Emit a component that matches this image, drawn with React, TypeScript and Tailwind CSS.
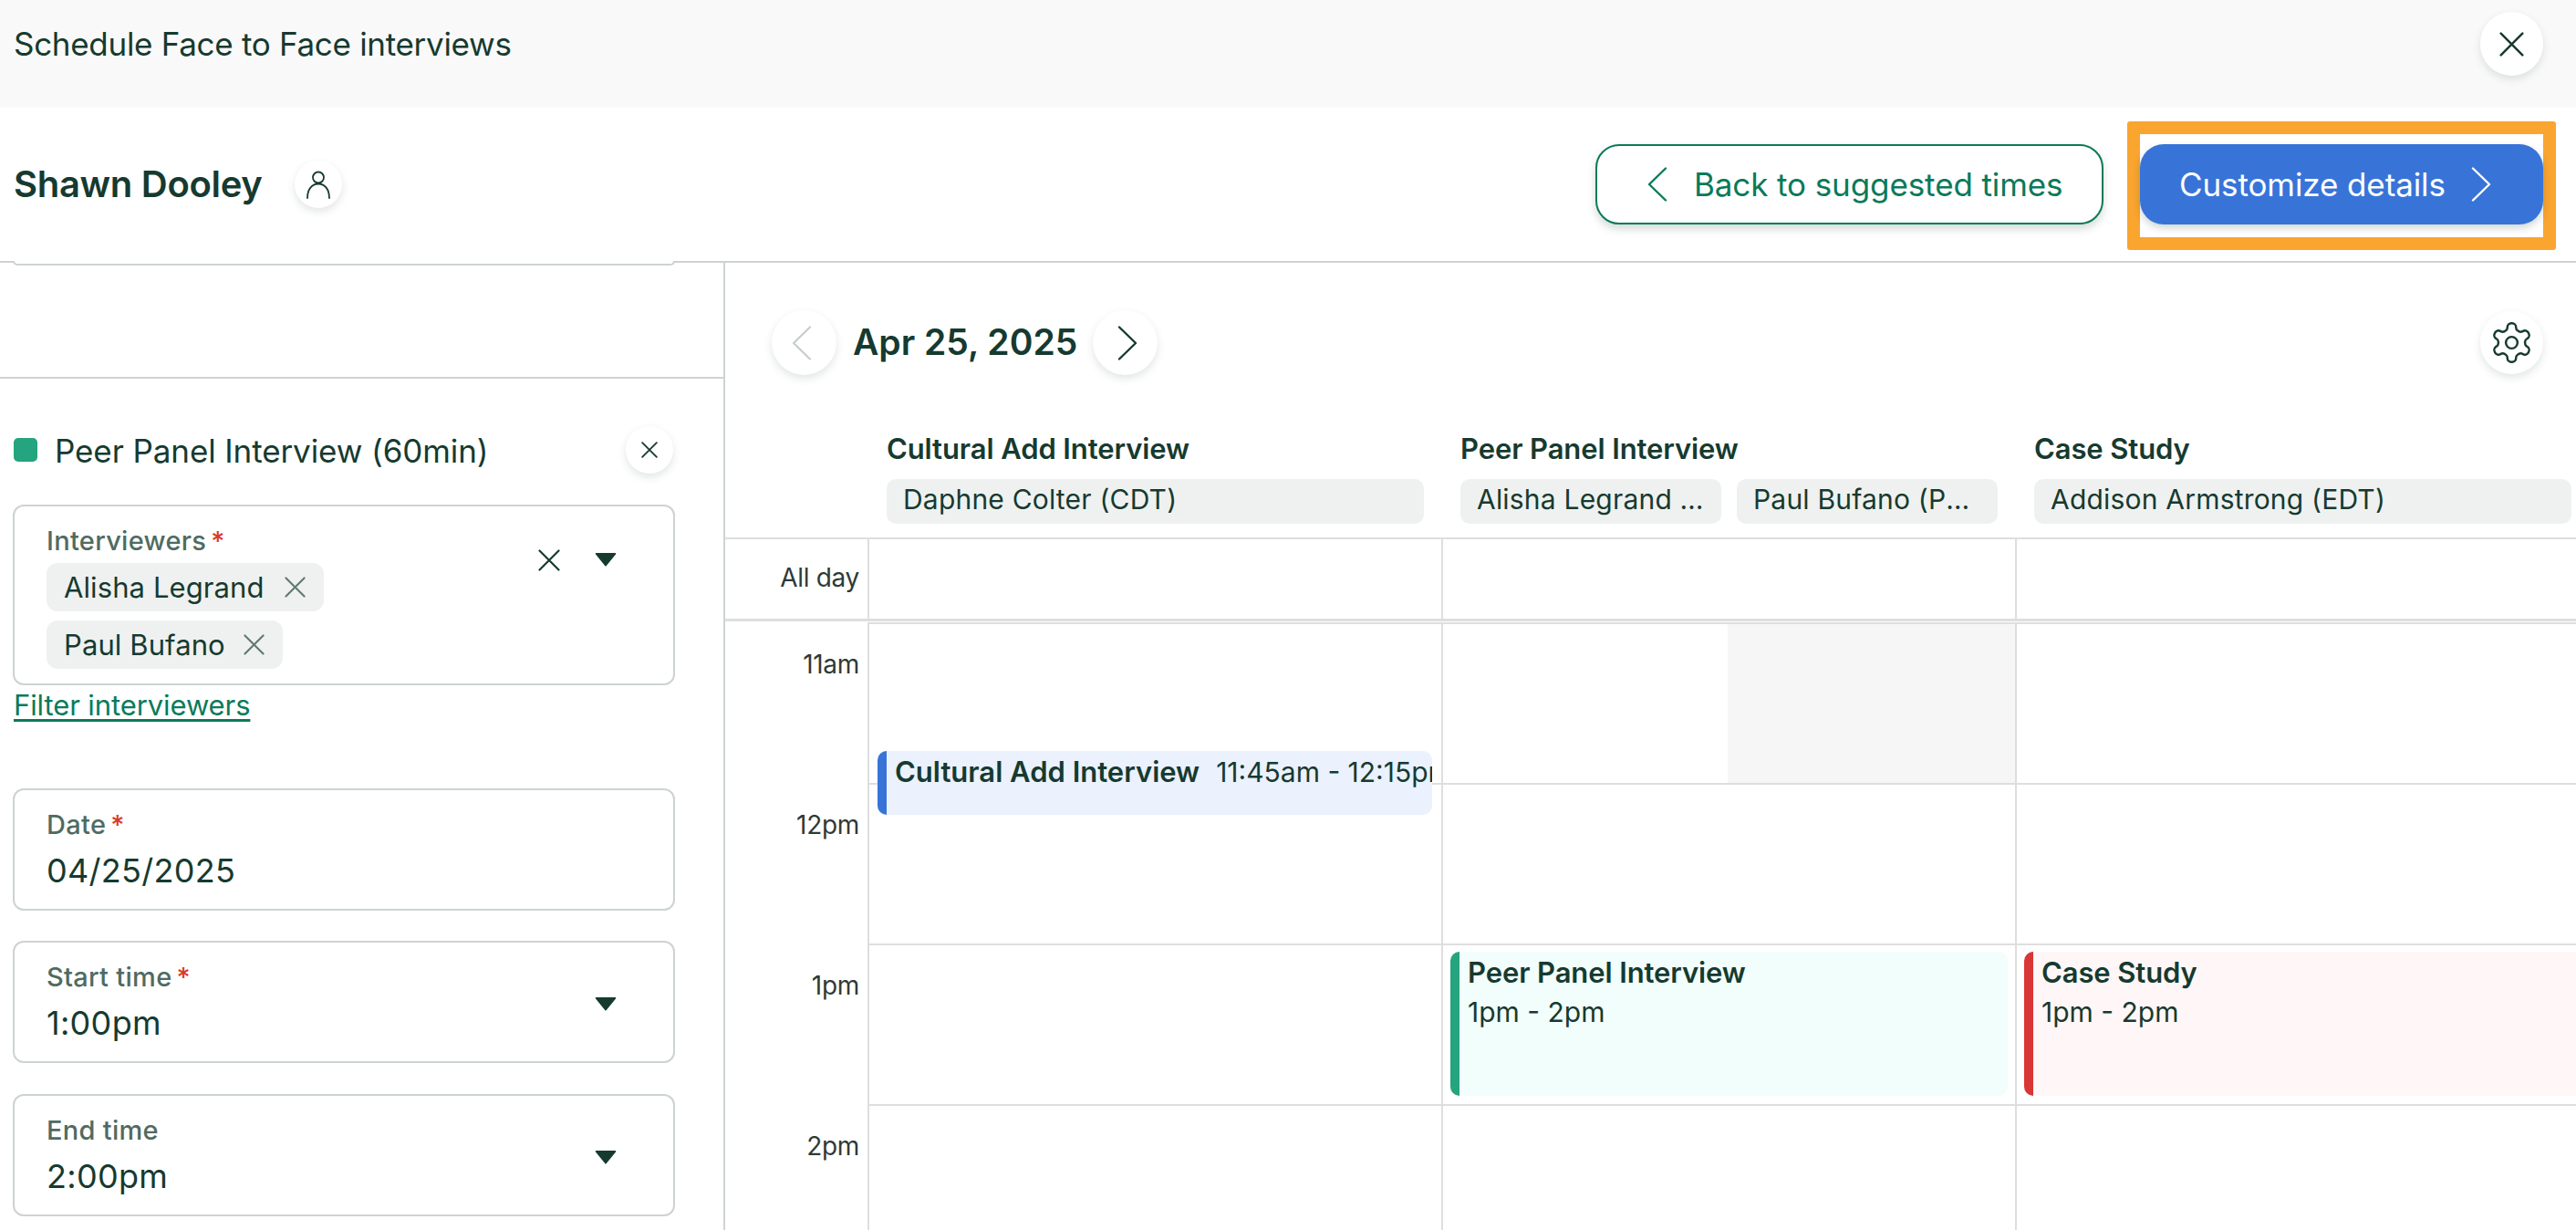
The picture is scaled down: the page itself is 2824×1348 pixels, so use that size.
import React from "react";

const X = ({ size, sw = 2.4, color = "#163a30" }: { size: number; sw?: number; color?: string }) => (
  <svg width={size} height={size} viewBox="0 0 24 24" fill="none" stroke={color} strokeWidth={sw} strokeLinecap="round">
    <path d="M1.5 1.5 22.5 22.5M22.5 1.5 1.5 22.5" />
  </svg>
);

const Caret = () => (
  <svg width="24" height="16" viewBox="0 0 24 16" className="shrink-0">
    <path d="M1.5 1h21a.8.8 0 0 1 .7 1.2L12.8 15a1 1 0 0 1-1.6 0L.8 2.2A.8.8 0 0 1 1.5 1z" fill="#163a30" />
  </svg>
);

const Chevron = ({ dir, color, w = 22, h = 38, sw = 2.4 }: { dir: "l" | "r"; color: string; w?: number; h?: number; sw?: number }) => (
  <svg width={w} height={h} viewBox={`0 0 ${w} ${h}`} fill="none" stroke={color} strokeWidth={sw} strokeLinecap="round" strokeLinejoin="round">
    {dir === "l" ? <path d={`M${w - 2} 1.5 2 ${h / 2} ${w - 2} ${h - 1.5}`} /> : <path d={`M2 1.5 ${w - 2} ${h / 2} 2 ${h - 1.5}`} />}
  </svg>
);

const Person = () => (
  <svg width="26" height="31" viewBox="0 0 26 31" fill="none" stroke="#163a30" strokeWidth="1.8">
    <circle cx="13" cy="7.5" r="6" />
    <path d="M1 30c0-9 4.5-15.5 12-15.5S25 21 25 30" strokeLinecap="round" />
  </svg>
);

const Gear = () => (
  <svg width="51" height="51" viewBox="0 0 24 24" fill="none" stroke="#163a30" strokeWidth="1.15" strokeLinecap="round" strokeLinejoin="round">
    <path d="M12.22 2h-.44a2 2 0 0 0-2 2v.18a2 2 0 0 1-1 1.73l-.43.25a2 2 0 0 1-2 0l-.15-.08a2 2 0 0 0-2.73.73l-.22.38a2 2 0 0 0 .73 2.73l.15.1a2 2 0 0 1 1 1.72v.51a2 2 0 0 1-1 1.74l-.15.09a2 2 0 0 0-.73 2.73l.22.38a2 2 0 0 0 2.73.73l.15-.08a2 2 0 0 1 2 0l.43.25a2 2 0 0 1 1 1.73V20a2 2 0 0 0 2 2h.44a2 2 0 0 0 2-2v-.18a2 2 0 0 1 1-1.73l.43-.25a2 2 0 0 1 2 0l.15.08a2 2 0 0 0 2.73-.73l.22-.39a2 2 0 0 0-.73-2.73l-.15-.08a2 2 0 0 1-1-1.74v-.5a2 2 0 0 1 1-1.74l.15-.09a2 2 0 0 0 .73-2.73l-.22-.38a2 2 0 0 0-2.73-.73l-.15.08a2 2 0 0 1-2 0l-.43-.25a2 2 0 0 1-1-1.73V4a2 2 0 0 0-2-2z" />
    <circle cx="12" cy="12" r="3" />
  </svg>
);

const Star = () => <span className="text-[#d93a2b] ml-[5px]">*</span>;

const Field = ({ label, req, value, caret }: { label: string; req?: boolean; value: string; caret?: boolean }) => (
  <div className="mx-[14px] w-[726px] h-[134px] border-2 border-[#cdd3d1] rounded-[12px] pl-[35px] pr-[62px] pt-[20px] flex justify-between">
    <div>
      <div className="h-[36px] leading-[36px] text-[29px] font-medium text-[#4f6b61] tracking-[0.3px]">
        {label}
        {req && <Star />}
      </div>
      <div className="mt-[10px] h-[44px] leading-[44px] text-[36px] text-[#163a30] tracking-[0.3px]">{value}</div>
    </div>
    {caret && (
      <div className="mt-[39px]">
        <Caret />
      </div>
    )}
  </div>
);

const Chip = ({ name, width }: { name: string; width: string }) => (
  <div className={`${width} h-[53px] bg-[#eff1f0] rounded-[12px] pl-[19px] pr-[20px] flex items-center justify-between`}>
    <span className="text-[31px] text-[#163a30] whitespace-nowrap tracking-[0.1px] translate-y-[1px]">{name}</span>
    <X size={23} sw={2.2} color="#5f7a70" />
  </div>
);

const HeaderChip = ({ text }: { text: string }) => (
  <div className="flex-1 min-w-0 h-[49px] bg-[#eff1f0] rounded-[10px] pl-[18px] pr-[14px] pb-[4px] flex items-center">
    <span className="text-[30px] text-[#163a30] truncate tracking-[0.2px]">{text}</span>
  </div>
);

const HeaderCol = ({ title, chips }: { title: string; chips: string[] }) => (
  <div className="w-[629px] shrink-0 pl-[21px] pr-[19px]">
    <div className="h-[40px] leading-[40px] text-[31px] font-semibold text-[#163a30] tracking-[-0.1px]">{title}</div>
    <div className="mt-[13px] flex gap-[17px]">
      {chips.map((c) => (
        <HeaderChip key={c} text={c} />
      ))}
    </div>
  </div>
);

const HourRows = () => (
  <>
    <div className="h-[176px] border-t-2 border-[#dedede]" />
    <div className="h-[176px] border-t-2 border-[#dedede]" />
    <div className="h-[176px] border-t-2 border-[#dedede]" />
    <div className="h-[176px] border-t-2 border-[#dedede]" />
  </>
);

const RoundBtn = ({ children, cls }: { children: React.ReactNode; cls: string }) => (
  <div className={`${cls} rounded-full bg-white flex items-center justify-center shadow-[0_4px_10px_rgba(20,50,40,0.12)] shrink-0`}>{children}</div>
);

export default function App() {
  return (
    <div className="w-[2824px] h-[1348px] overflow-hidden bg-white text-[#163a30] font-[Inter,sans-serif]">
      {/* top bar */}
      <div className="h-[118px] bg-[#f9f9f9] pt-[13px] pl-[15px] pr-[36px]">
        <div className="h-[70px] flex items-center justify-between">
          <span className="text-[35px] tracking-[-0.3px]">Schedule Face to Face interviews</span>
          <RoundBtn cls="w-[69px] h-[70px]">
            <X size={27} sw={2.2} />
          </RoundBtn>
        </div>
      </div>

      {/* candidate row */}
      <div className="h-[170px] border-b-2 border-[#cdd3d1] pl-[15px] pr-[22px] flex items-center justify-between">
        <div className="flex items-center">
          <span className="text-[40px] font-semibold tracking-[-0.3px]">Shawn Dooley</span>
          <RoundBtn cls="ml-[35px] w-[52px] h-[52px]">
            <Person />
          </RoundBtn>
        </div>
        <div className="flex items-center">
          <div className="w-[557px] h-[88px] border-2 border-[#0a7a5a] rounded-[26px] bg-white shadow-[0_5px_10px_rgba(20,50,40,0.18)] pl-[55px] flex items-center text-[#0a7a5a]">
            <Chevron dir="l" color="#0a7a5a" />
            <span className="ml-[29px] text-[35px] whitespace-nowrap tracking-[-0.1px]">Back to suggested times</span>
          </div>
          <div className="ml-[26px] mt-[3px] w-[470px] h-[141px] border-[14px] border-[#f9a52f] rounded-[3px] pt-[11px]">
            <div className="w-[442px] h-[88px] bg-[#3874d8] rounded-[26px] shadow-[0_4px_8px_rgba(20,50,40,0.2)] pl-[43px] flex items-center text-white">
              <span className="text-[35px] whitespace-nowrap tracking-[-0.1px]">Customize details</span>
              <span className="ml-[28px]">
                <Chevron dir="r" color="#ffffff" />
              </span>
            </div>
          </div>
        </div>
      </div>

      <div className="flex h-[1060px]">
        {/* left panel */}
        <div className="w-[795px] shrink-0 border-r-2 border-[#cdd3d1]">
          <div className="h-[129px] border-b-2 border-[#cdd3d1]">
            <div className="ml-[14px] -mt-[2px] w-[726px] h-[5px] border-2 border-t-0 border-[#cdd3d1] rounded-b-[8px] bg-white relative" />
          </div>
          <div className="mt-[52px] pl-[15px] pr-[55px] h-[52px] flex items-center justify-between">
            <div className="flex items-center">
              <div className="w-[26px] h-[26px] rounded-[5px] bg-[#24a47f]" />
              <span className="ml-[19px] text-[35px] tracking-[-0.1px] translate-y-[1px]">Peer Panel Interview (60min)</span>
            </div>
            <RoundBtn cls="w-[52px] h-[52px]">
              <X size={18} sw={2.4} />
            </RoundBtn>
          </div>

          <div className="mt-[34px] mx-[14px] w-[726px] h-[198px] border-2 border-[#cdd3d1] rounded-[12px] pl-[35px] pr-[62px] pt-[20px] flex justify-between">
            <div>
              <div className="h-[36px] leading-[36px] text-[29px] font-medium text-[#4f6b61] tracking-[0.3px]">
                Interviewers
                <Star />
              </div>
              <div className="mt-[6px] flex flex-col gap-[10px]">
                <Chip name="Alisha Legrand" width="w-[304px]" />
                <Chip name="Paul Bufano" width="w-[259px]" />
              </div>
            </div>
            <div className="mt-[27px] flex items-start gap-[38px]">
              <X size={24} sw={2.2} />
              <div className="mt-[3px]">
                <Caret />
              </div>
            </div>
          </div>

          <div className="mt-[4px] ml-[15px] h-[36px] leading-[36px] text-[31px] text-[#0a7a5a] underline underline-offset-[4px] tracking-[-0.1px]">
            Filter interviewers
          </div>

          <div className="mt-[73px]">
            <Field label="Date" req value="04/25/2025" />
          </div>
          <div className="mt-[33px]">
            <Field label="Start time" req value="1:00pm" caret />
          </div>
          <div className="mt-[34px]">
            <Field label="End time" value="2:00pm" caret />
          </div>
        </div>

        {/* calendar */}
        <div className="flex-1 min-w-0 overflow-hidden">
          <div className="pt-[52px] pl-[51px] pr-[36px] flex items-center justify-between">
            <div className="flex items-center">
              <RoundBtn cls="w-[71px] h-[71px] pr-[5px]">
                <Chevron dir="l" color="#c6cdca" sw={2.2} />
              </RoundBtn>
              <span className="ml-[18px] text-[39px] font-semibold">Apr 25, 2025</span>
              <RoundBtn cls="ml-[17px] w-[71px] h-[71px] pl-[5px]">
                <Chevron dir="r" color="#163a30" sw={2.4} />
              </RoundBtn>
            </div>
            <RoundBtn cls="w-[69px] h-[69px]">
              <Gear />
            </RoundBtn>
          </div>

          <div className="mt-[61px] pb-[15px] border-b-2 border-[#dedede] flex">
            <div className="w-[156px] shrink-0" />
            <HeaderCol title="Cultural Add Interview" chips={["Daphne Colter (CDT)"]} />
            <HeaderCol title="Peer Panel Interview" chips={["Alisha Legrand (CDT)", "Paul Bufano (PDT)"]} />
            <HeaderCol title="Case Study" chips={["Addison Armstrong (EDT)"]} />
          </div>

          {/* all day */}
          <div className="h-[90px] border-b-[3px] border-[#dedede] flex">
            <div className="w-[156px] shrink-0 pr-[9px] pt-[26px] text-right text-[28px] leading-[32px] text-[#2f3a37] tracking-[-0.3px]">All day</div>
            <div className="w-[629px] shrink-0 border-l-2 border-[#dedede]" />
            <div className="w-[629px] shrink-0 border-l-2 border-[#dedede]" />
            <div className="w-[629px] shrink-0 border-l-2 border-[#dedede]" />
          </div>

          {/* hours */}
          <div className="mt-[1px] flex">
            <div className="w-[156px] shrink-0 pr-[9px] text-right text-[28px] leading-[32px] text-[#2f3a37] tracking-[-0.3px]">
              <div className="h-[176px] pt-[30px]">11am</div>
              <div className="h-[176px] pt-[30px]">12pm</div>
              <div className="h-[176px] pt-[30px]">1pm</div>
              <div className="h-[176px] pt-[30px]">2pm</div>
            </div>

            <div className="w-[629px] shrink-0 border-l-2 border-[#dedede] relative">
              <HourRows />
              <div className="absolute left-[9px] top-[141px] w-[608px] h-[70px] bg-[#ebf1fd] border-l-[10px] border-[#3874d8] rounded-[10px] pl-[9px] pr-[2px] pt-[5px] overflow-hidden whitespace-nowrap text-[31px] leading-[36px]">
                <span className="font-semibold">Cultural Add Interview</span>
                <span className="ml-[18px] text-[30px]">11:45am - 12:15pm</span>
              </div>
            </div>

            <div className="w-[629px] shrink-0 border-l-2 border-[#dedede] relative">
              <HourRows />
              <div className="absolute left-[312px] right-0 top-[2px] h-[174px] bg-[#f6f6f6]" />
              <div className="absolute left-[8px] top-[361px] w-[611px] h-[158px] bg-[#f2fefb] border-l-[10px] border-[#24a47f] rounded-[10px] pl-[9px] pt-[5px] overflow-hidden text-[31px] leading-[36px]">
                <div className="font-semibold tracking-[-0.1px]">Peer Panel Interview</div>
                <div className="mt-[7px] text-[30px]">1pm - 2pm</div>
              </div>
            </div>

            <div className="w-[629px] shrink-0 border-l-2 border-[#dedede] relative">
              <HourRows />
              <div className="absolute left-[8px] top-[361px] w-[611px] h-[158px] bg-[#fff7f7] border-l-[10px] border-[#d93636] rounded-[10px] pl-[9px] pt-[5px] overflow-hidden text-[31px] leading-[36px]">
                <div className="font-semibold tracking-[-0.1px]">Case Study</div>
                <div className="mt-[7px] text-[30px]">1pm - 2pm</div>
              </div>
            </div>
          </div>
        </div>
      </div>
    </div>
  );
}
